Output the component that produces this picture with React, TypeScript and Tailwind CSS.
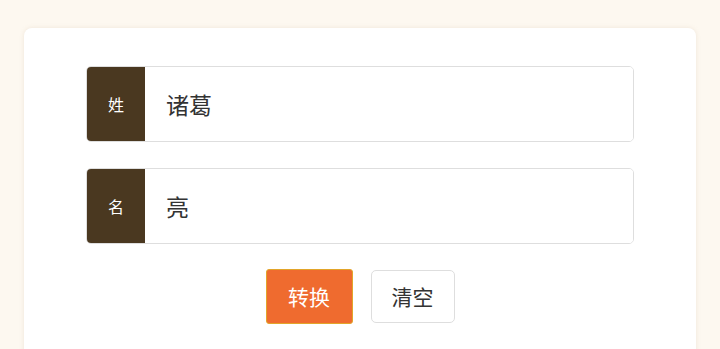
import { useState } from 'react';

export default function App() {
  const [surname, setSurname] = useState('诸葛');
  const [given, setGiven] = useState('亮');

  return (
    <div className="min-h-[349px] bg-[#fdf8f0] px-6 pt-7 font-['Noto_Sans_CJK_SC','Noto_Sans',sans-serif]">
      <div className="rounded-lg bg-white px-[62px] pt-[38px] pb-12 shadow-[0_0_4px_rgba(200,180,150,0.25)]">
        <div className="space-y-[26px]">
          {[
            { label: '姓', value: surname, set: setSurname },
            { label: '名', value: given, set: setGiven },
          ].map((row) => (
            <div key={row.label} className="flex h-[76px] overflow-hidden rounded-[5px] border border-[#dedede]">
              <div className="flex w-[58px] shrink-0 items-center justify-center bg-[#4a3820] text-[16px] text-white">
                {row.label}
              </div>
              <input
                value={row.value}
                onChange={(e) => row.set(e.target.value)}
                className="min-w-0 flex-1 bg-white px-[21px] text-[23px] text-[#333] outline-none"
              />
            </div>
          ))}
        </div>

        <div className="mt-[25px] flex justify-center gap-[18px]">
          <button className="h-[55px] w-[87px] rounded-[3px] border border-[#e2a52a] bg-[#ef6b2f] text-[21px] text-white">
            转换
          </button>
          <button
            onClick={() => {
              setSurname('');
              setGiven('');
            }}
            className="mt-px h-[53px] w-[84px] rounded-[5px] border border-[#dedede] bg-white text-[21px] text-[#333]"
          >
            清空
          </button>
        </div>
      </div>
    </div>
  );
}
